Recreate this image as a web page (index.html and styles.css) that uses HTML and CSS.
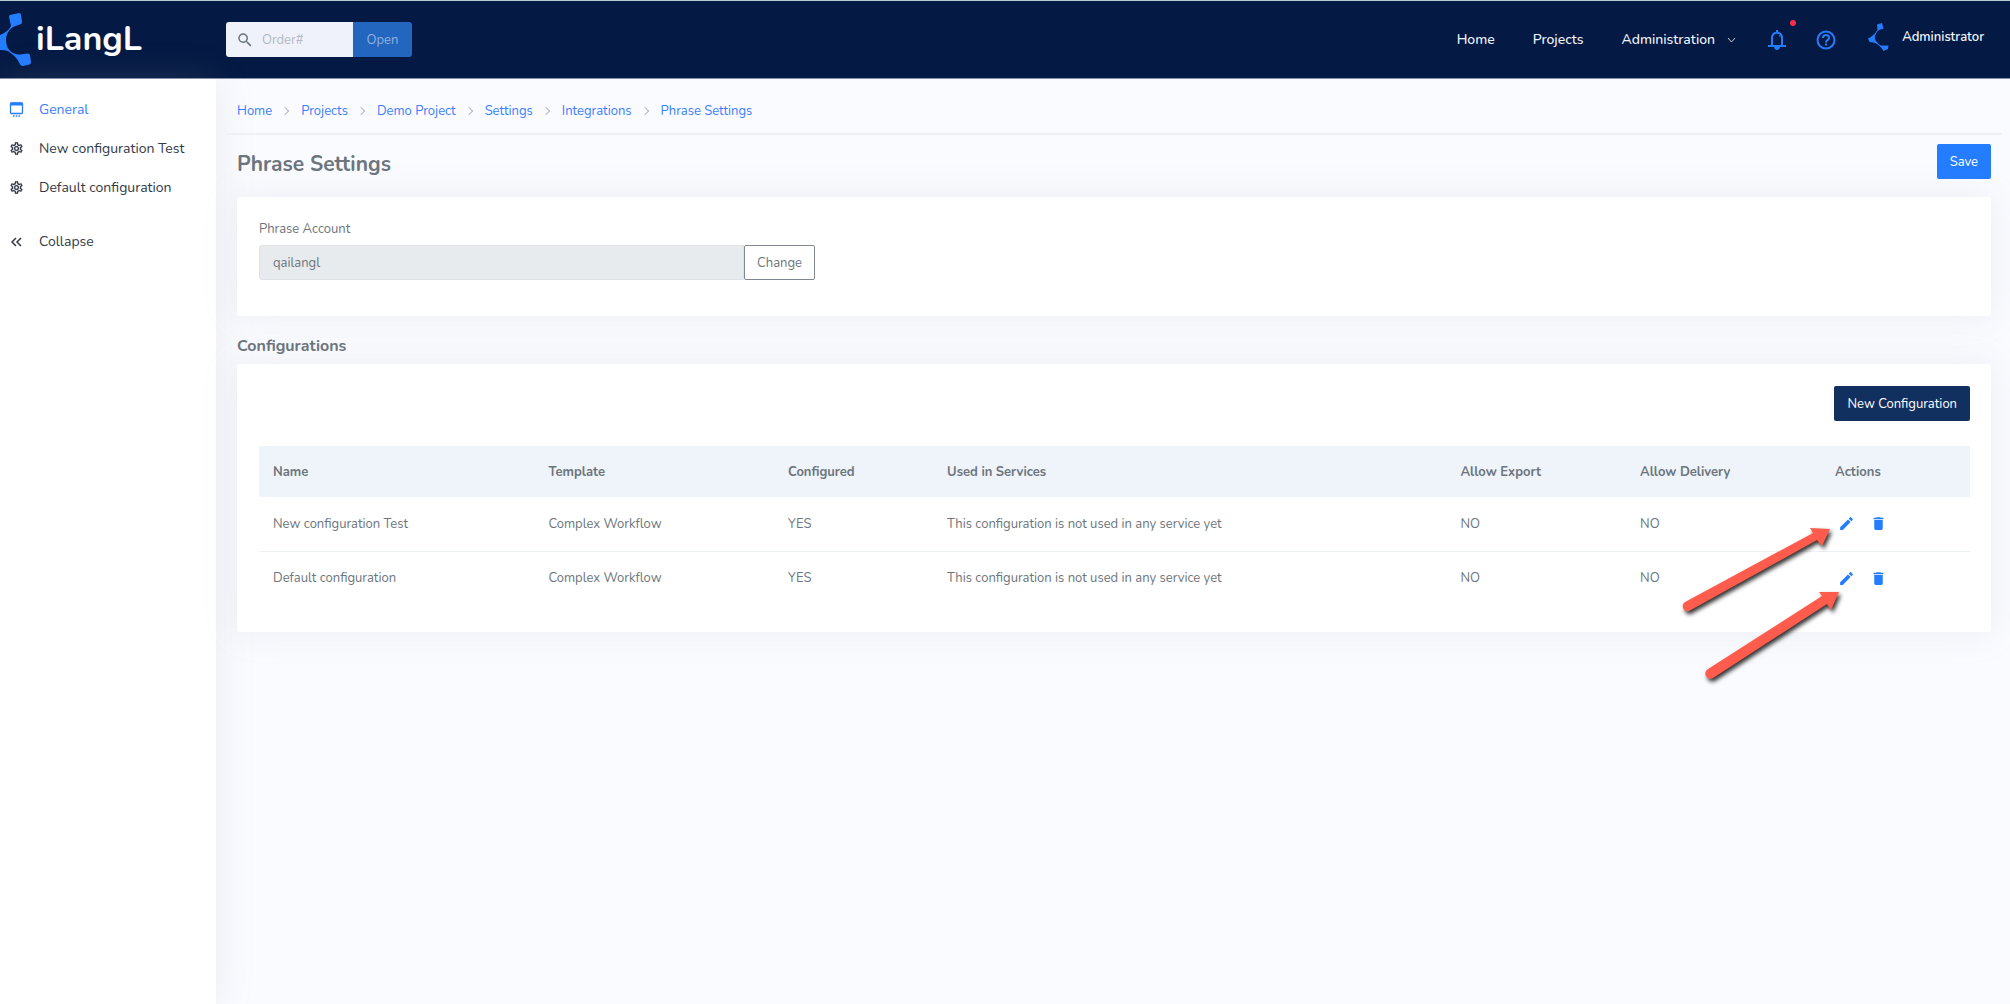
FILE: index.html
```html
<!DOCTYPE html>
<html lang="en">
<head>
<meta charset="utf-8">
<meta name="viewport" content="width=device-width, initial-scale=1">
<title>Phrase Settings - iLangL</title>
<link rel="stylesheet" href="styles.css">
</head>
<body>
<svg class="sprite" aria-hidden="true">
  <symbol id="gear" viewBox="0 0 24 24"><path fill="currentColor" stroke="currentColor" stroke-width=".2" d="M12 8a4 4 0 0 1 4 4 4 4 0 0 1-4 4 4 4 0 0 1-4-4 4 4 0 0 1 4-4m0 2a2 2 0 0 0-2 2 2 2 0 0 0 2 2 2 2 0 0 0 2-2 2 2 0 0 0-2-2m-2 12c-.25 0-.46-.18-.5-.42l-.37-2.65c-.63-.25-1.17-.59-1.69-.99l-2.49 1.01c-.22.08-.49 0-.61-.22l-2-3.46a.493.493 0 0 1 .12-.64l2.11-1.66L4.5 12l.07-1-2.11-1.63a.493.493 0 0 1-.12-.64l2-3.46c.12-.22.39-.31.61-.22l2.49 1c.52-.39 1.06-.73 1.69-.98l.37-2.65c.04-.24.25-.42.5-.42h4c.25 0 .46.18.5.42l.37 2.65c.63.25 1.17.59 1.69.98l2.49-1c.22-.09.49 0 .61.22l2 3.46c.13.22.07.49-.12.64L19.43 11l.07 1-.07 1 2.11 1.63c.19.15.25.42.12.64l-2 3.46c-.12.22-.39.31-.61.22l-2.49-1c-.52.39-1.06.73-1.69.98l-.37 2.65c-.04.24-.25.42-.5.42h-4m1.25-18l-.37 2.61c-1.2.25-2.26.89-3.03 1.78L5.44 7.35l-.75 1.3L6.8 10.200a5.550 5.550 0 0 0 0 3.600l-2.120 1.560.75 1.300 2.430-1.040c.770.880 1.820 1.520 3.010 1.760l.370 2.620h1.520l.370-2.610c1.190-.250 2.240-.890 3.010-1.770l2.430 1.040.75-1.300-2.120-1.550c.4-1.170.4-2.440 0-3.610l2.110-1.550-.75-1.300-2.410 1.040a5.420 5.420 0 0 0-3.030-1.770L12.750 4h-1.500z"/></symbol>
  <symbol id="pencil" viewBox="0 0 24 24"><path fill="currentColor" d="M20.710 7.040c.390-.390.390-1.040 0-1.410l-2.340-2.340c-.370-.390-1.020-.390-1.410 0l-1.840 1.830 3.750 3.750M3 17.250V21h3.750L17.810 9.930l-3.750-3.750L3 17.250z"/></symbol>
  <symbol id="trash" viewBox="0 0 24 24"><path fill="currentColor" d="M19 4h-3.500l-1-1h-5l-1 1H5v2h14M6 19a2 2 0 0 0 2 2h8a2 2 0 0 0 2-2V7H6v12z"/></symbol>
</svg>

<header class="topbar">
  <a class="brand" href="#">
    <svg class="brand-mark" width="31" height="54" viewBox="0 0 31 54" aria-hidden="true">
      <path fill="#247dff" d="M10 2L19 0Q20.500 0 21 1.500L22 9Q22 10.500 21 11L13 14Q6 19 6 27Q6 36 13 40Q16 41.500 20 41.500L28 40.500Q29.500 40.500 30 42L31 49.500Q31 51 29.500 51.500L23 53Q21 53 20.500 52L17 46Q14 42 8 38Q5 37 0 37V22Q8 19 11 13L9 4Q9 2.500 10 2Z"/>
    </svg>
    <span class="brand-name">iLangL</span>
  </a>
  <form class="search">
    <label class="search-box">
      <svg width="18" height="18" viewBox="0 0 24 24" aria-label="Order number"><path fill="#6c757d" d="M9.500 3A6.500 6.500 0 0 1 16 9.500c0 1.610-.590 3.090-1.560 4.230l.270.270h.79l5 5-1.500 1.500-5-5v-.79l-.270-.270A6.516 6.516 0 0 1 9.500 16 6.500 6.500 0 0 1 3 9.500 6.500 6.500 0 0 1 9.500 3m0 2C7 5 5 7 5 9.500S7 14 9.500 14 14 12 14 9.500 12 5 9.500 5z"/></svg>
      <input type="text" placeholder="Order#">
    </label>
    <button type="button">Open</button>
  </form>
  <nav class="topnav">
    <a href="#">Home</a>
    <a href="#">Projects</a>
    <a href="#" class="has-menu">Administration
      <svg width="9" height="6" viewBox="0 0 9 6" aria-hidden="true"><path d="M1 1l3.500 4L8 1" fill="none" stroke="#c5cddd" stroke-width="1"/></svg>
    </a>
  </nav>
  <div class="tools">
    <button type="button" class="bell" aria-label="Notifications">
      <svg width="18" height="21" viewBox="0 0 18 21"><g fill="none" stroke="#247dff" stroke-width="2"><path d="M4 16V9q0-5 5-5.500q5 .5 5 5.500v7M0 17h18M9 1v3"/><path d="M11 6q1 .5 1.200 2" stroke-width="1"/></g><path fill="#247dff" d="M6 18h6q-.5 3-3 3t-3-3z"/></svg>
      <span class="dot"></span>
    </button>
    <button type="button" aria-label="Help">
      <svg width="20" height="20" viewBox="0 0 20 20"><circle cx="10" cy="10" r="8.500" fill="none" stroke="#247dff" stroke-width="2"/><path d="M7 8q0-3 3-3t3 2.700q0 1.500-1.500 2.500T10 12.500" fill="none" stroke="#247dff" stroke-width="2"/><path fill="#247dff" d="M9 13.500h2v2H9z"/></svg>
    </button>
  </div>
  <a class="user" href="#">
    <svg width="21" height="28" viewBox="0 0 21 28" aria-hidden="true"><path fill="#247dff" d="M9 1.500L14 0l1.500 5.500L11 7Q6.500 11 6.800 15.500Q8.500 20 13 22.500L20.500 22.500L20 26L15.500 28L13 24.500Q9 20 5 19.500L1.500 19L0 15.500Q5 13.500 9.500 7Z"/></svg>
    <span>Administrator</span>
  </a>
</header>

<div class="layout">
  <aside class="sidebar">
    <nav>
      <a href="#" class="active"><svg width="15" height="15" viewBox="0 0 15 15" aria-hidden="true"><rect x="1.500" y="1" width="12" height="10.500" rx="1" fill="none" stroke="#247dff" stroke-width="1.300"/><path d="M1.500 2h12" stroke="#247dff" stroke-width="3"/><path d="M4 14h7" stroke="#247dff" stroke-width="1.500" stroke-dasharray="1.500 1.250"/></svg>General</a>
      <a href="#"><svg width="15" height="15"><use href="#gear"/></svg>New configuration Test</a>
      <a href="#"><svg width="15" height="15"><use href="#gear"/></svg>Default configuration</a>
    </nav>
    <button type="button" class="collapse"><svg width="15" height="10" viewBox="0 0 15 10" aria-hidden="true"><path d="M7 1l-4 4 4 4M12 1l-4 4 4 4" fill="none" stroke="currentColor" stroke-width="1.500"/></svg>Collapse</button>
  </aside>

  <main class="content">
    <ol class="crumbs">
      <li><a href="#">Home</a></li>
      <li><a href="#">Projects</a></li>
      <li><a href="#">Demo Project</a></li>
      <li><a href="#">Settings</a></li>
      <li><a href="#">Integrations</a></li>
      <li><a href="#">Phrase Settings</a></li>
    </ol>
    <div class="page">
      <div class="page-head">
        <h1>Phrase Settings</h1>
        <button type="button" class="btn btn-primary">Save</button>
      </div>
      <section class="card account">
        <label for="account">Phrase Account</label>
        <div class="input-group">
          <input id="account" type="text" value="qailangl" readonly>
          <button type="button" class="btn btn-outline">Change</button>
        </div>
      </section>
      <h2>Configurations</h2>
      <section class="card configs">
        <div class="card-actions"><button type="button" class="btn btn-dark">New Configuration</button></div>
        <table>
          <colgroup><col class="c-name"><col class="c-template"><col class="c-configured"><col class="c-services"><col class="c-export"><col class="c-delivery"><col></colgroup>
          <thead>
            <tr><th>Name</th><th>Template</th><th>Configured</th><th>Used in Services</th><th>Allow Export</th><th>Allow Delivery</th><th>Actions</th></tr>
          </thead>
          <tbody>
            <tr><td>New configuration Test</td><td>Complex Workflow</td><td>YES</td><td>This configuration is not used in any service yet</td><td>NO</td><td>NO</td>
              <td><div class="row-actions"><a href="#" aria-label="Edit"><svg width="17" height="17"><use href="#pencil"/></svg></a><a href="#" aria-label="Delete"><svg width="17" height="17"><use href="#trash"/></svg></a></div></td></tr>
            <tr><td>Default configuration</td><td>Complex Workflow</td><td>YES</td><td>This configuration is not used in any service yet</td><td>NO</td><td>NO</td>
              <td><div class="row-actions"><a href="#" aria-label="Edit"><svg width="17" height="17"><use href="#pencil"/></svg></a><a href="#" aria-label="Delete"><svg width="17" height="17"><use href="#trash"/></svg></a></div></td></tr>
          </tbody>
        </table>
        <svg class="pointers" width="171" height="170" viewBox="0 0 171 170" aria-hidden="true">
          <g fill="#ff5c4d">
            <path d="M150 14L130 13L133 18L5 87A5 5 0 0 0 9 96L137 25L142 31Z"/>
            <path d="M159 77L139 77L142 81L28 154A5 5 0 0 0 33 163L147 89L151 95Z"/>
          </g>
        </svg>
      </section>
    </div>
  </main>
</div>
</body>
</html>
```
FILE: styles.css
```css
* { box-sizing: border-box; }

body {
  margin: 0;
  min-height: 100vh;
  display: flex;
  flex-direction: column;
  background: #fafbff;
  color: #6c757d;
  font: 13px/20px Nunito, Lato, sans-serif;
}

a { color: #3b7eff; text-decoration: none; }
button, input { font: inherit; }
button { cursor: pointer; }
.sprite { display: none; }

/* Top bar */
.topbar {
  display: flex;
  align-items: center;
  height: 79px;
  padding-right: 26px;
  background: #041943;
  border-top: 1px solid #b5cbcf;
  border-bottom: 1px solid #8490aa;
}
.brand { display: flex; align-items: center; gap: 5px; width: 226px; color: #fff; }
.brand-name { font-size: 34px; line-height: 36px; padding-bottom: 2px; font-weight: 700; }
.search { display: flex; height: 35px; }
.search-box {
  display: flex;
  align-items: center;
  gap: 8px;
  width: 127px;
  padding-left: 10px;
  background: #eff2fa;
  border-radius: 3px 0 0 3px;
}
.search-box input {
  width: 80px;
  padding: 0;
  border: 0;
  background: none;
  color: #6c757d;
}
.search-box input::placeholder { color: #b3bac3; opacity: 1; }
.search button {
  width: 59px;
  padding: 0;
  border: 0;
  border-radius: 0 3px 3px 0;
  background: #2366bf;
  color: #91b0dd;
}
.topnav { display: flex; gap: 38px; margin-left: auto; font-size: 14px; font-weight: 500; }
.topnav a { color: #f1f4fa; }
.has-menu { display: flex; align-items: center; gap: 12px; }
.tools { display: flex; align-items: center; gap: 30px; margin-left: 32px; }
.tools button { position: relative; display: flex; padding: 0; border: 0; background: none; }
.dot {
  position: absolute;
  top: -9px;
  right: -10px;
  width: 6px;
  height: 6px;
  border-radius: 50%;
  background: #ff2a4f;
}
.user { display: flex; align-items: center; gap: 13px; margin-left: 32px; padding-bottom: 5px; color: #f1f4fa; font-weight: 600; }

/* Side navigation */
.layout { flex: 1; display: flex; }
.sidebar {
  width: 216px;
  flex: none;
  padding-top: 11px;
  background: #fff;
  box-shadow: 0 0 35px rgba(154, 161, 171, .18);
  font-size: 14px;
}
.sidebar a, .collapse {
  display: flex;
  align-items: center;
  gap: 15px;
  height: 39px;
  padding: 0 9px;
  color: #313a46;
}
.sidebar svg { width: 15px; flex: none; }
.sidebar .active { color: #3b7eff; }
.collapse { margin-top: 15px; border: 0; background: none; }

/* Content */
.content { flex: 1; min-width: 0; padding: 0 8px 0 10px; }
.crumbs {
  display: flex;
  margin: 0;
  padding: 22px 11px 12px;
  border-bottom: 2px solid #eef0f4;
  list-style: none;
}
.crumbs li { display: flex; align-items: center; }
.crumbs li + li::before {
  content: "";
  width: 5px;
  height: 5px;
  margin: 0 13px 0 10px;
  border: solid #b4bbc3;
  border-width: 1px 1px 0 0;
  rotate: 45deg;
}
.page { padding: 0 11px; }
.page-head {
  display: flex;
  align-items: center;
  justify-content: space-between;
  padding: 9px 0 18px;
}
h1, h2 { margin: 0; font-weight: 700; }
h1 { padding-top: 4px; font-size: 21px; line-height: 30px; }
h2 { padding: 20px 0 8px; font-size: 16px; line-height: 20px; }
.btn {
  height: 35px;
  padding: 0 12px;
  border: 1px solid transparent;
  border-radius: 2px;
  color: #fff;
}
.btn-primary { background: #247dff; }
.btn-dark { background: #12305f; }
.btn-outline { background: #fff; border-color: #7f8890; color: #6c757d; }
.card {
  position: relative;
  background: #fff;
  border-radius: 3px;
  box-shadow: 0 0 35px rgba(154, 161, 171, .15);
}
.account { padding: 22px 22px 36px; }
.account label { display: block; margin-bottom: 6px; }
.input-group { display: flex; width: calc(33.333% - 14px); min-width: 300px; }
.input-group input {
  flex: 1;
  min-width: 0;
  padding: 0 13px;
  border: 1px solid #dee2e6;
  border-radius: 3px 0 0 3px;
  background: #e7ebee;
  color: #6c757d;
}
.configs { padding: 22px 21px 27px 22px; }
.card-actions { display: flex; justify-content: flex-end; margin-bottom: 25px; }
table { width: 100%; border-collapse: collapse; table-layout: fixed; }
.c-name { width: 16.1%; }
.c-template { width: 14%; }
.c-configured { width: 9.3%; }
.c-services { width: 30%; }
.c-export { width: 10.5%; }
.c-delivery { width: 11.4%; }
th, td { padding: 0 14px; text-align: left; }
th { height: 51px; background: #eff3fa; font-weight: 700; }
td { height: 54px; }
tbody tr + tr td { border-top: 1px solid #eef1f4; }
.row-actions { display: flex; gap: 15px; padding-left: 3px; }
.row-actions a { display: flex; color: #247dff; }

/* Callout arrows laid over the table */
.pointers {
  position: absolute;
  top: 151px;
  right: 140px;
  overflow: visible;
  pointer-events: none;
  filter: drop-shadow(2px 3px 2px rgba(0, 0, 0, .8));
}
```
